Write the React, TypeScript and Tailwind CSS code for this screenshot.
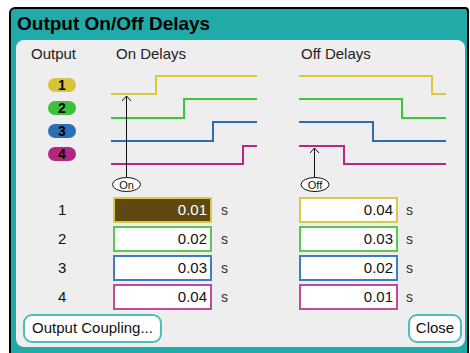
import React from 'react';

const FONT = { fontFamily: '"Liberation Sans", Arial, sans-serif' };

const outputs = [
  { id: 1, badge: 'bg-[#d6c33a]', line: '#dcc83a', border: 'border-[#d9c84a]', on: '0.01', off: '0.04' },
  { id: 2, badge: 'bg-[#3fc03c]', line: '#3cc43a', border: 'border-[#5ac850]', on: '0.02', off: '0.03' },
  { id: 3, badge: 'bg-[#2c6fb6]', line: '#2a6db4', border: 'border-[#3f7dc2]', on: '0.03', off: '0.02' },
  { id: 4, badge: 'bg-[#b3287f]', line: '#b52886', border: 'border-[#c04a9c]', on: '0.04', off: '0.01' },
];

const onPaths = ['M6 24 H51 V6 H152', 'M6 48 H79 V29 H152', 'M6 71 H108 V52 H152', 'M6 94 H138 V76 H152'];
const offPaths = ['M9 6 H142 V24 H156', 'M9 29 H112 V48 H156', 'M9 52 H83 V71 H156', 'M9 76 H54 V94 H156'];

const Marker: React.FC<{ x: number; tip: number; cx: number; label: string }> = ({ x, tip, cx, label }) => (
  <g>
    <line x1={x} y1={tip} x2={x} y2={107} stroke="#111" strokeWidth={1} />
    <path d={`M${x - 4.5} ${tip + 5} L${x} ${tip} L${x + 4.5} ${tip + 5}`} fill="none" stroke="#111" strokeWidth={1} />
    <ellipse cx={cx} cy={114.5} rx={14} ry={7} fill="#fff" stroke="#111" strokeWidth={1} />
    <text x={cx} y={118.5} textAnchor="middle" fontSize={11} fill="#111" style={FONT}>
      {label}
    </text>
  </g>
);

const DelayInput: React.FC<{ value: string; border: string; selected?: boolean }> = ({ value, border, selected }) => (
  <div
    className={`w-[99px] h-[26px] border-2 ${border} flex items-center justify-end pr-[3px] text-[15px] ${
      selected ? 'bg-[#5e4912] text-white' : 'bg-white text-[#111]'
    }`}
  >
    {value}
  </div>
);

export default function App() {
  return (
    <div className="w-[470px] h-[353px] bg-white overflow-hidden" style={FONT}>
      <div className="ml-[9px] mt-[7px] w-[460px] h-[346px] bg-[#20aaa8] border-l-2 border-t-2 border-r-2 border-black rounded-tl-[6px] rounded-tr-[4px]">
        <div className="h-[31px] flex items-center pl-[6px] text-[19px] font-bold text-black">Output On/Off Delays</div>

        <div className="ml-[5px] w-[449px] h-[307px] bg-[#eeeeee] rounded-[8px]">
          <div className="pt-[5px] flex h-[22px] text-[15px] leading-[17px] text-[#222]">
            <span className="w-[100px] pl-[15px]">Output</span>
            <span className="w-[185px]">On Delays</span>
            <span>Off Delays</span>
          </div>

          <div className="mt-[8px] flex h-[125px]">
            <div className="w-[89px] pl-[32px] pt-[8px] flex flex-col gap-[9px]">
              {outputs.map((o) => (
                <div
                  key={o.id}
                  className={`w-[28px] h-[14px] rounded-[7px] ${o.badge} flex items-center justify-center text-[14px] font-bold leading-none text-black`}
                >
                  {o.id}
                </div>
              ))}
            </div>

            <svg width={160} height={125} viewBox="0 0 160 125">
              {onPaths.map((d, i) => (
                <path key={d} d={d} fill="none" stroke={outputs[i].line} strokeWidth={2} />
              ))}
              <Marker x={21.5} tip={26} cx={21.5} label="On" />
            </svg>

            <div className="w-[25px]" />

            <svg width={165} height={125} viewBox="0 0 165 125">
              {offPaths.map((d, i) => (
                <path key={d} d={d} fill="none" stroke={outputs[i].line} strokeWidth={2} />
              ))}
              <Marker x={24.5} tip={78} cx={25} label="Off" />
            </svg>
          </div>

          <div className="mt-[2px] flex flex-col gap-[3px]">
            {outputs.map((o, i) => (
              <div key={o.id} className="h-[26px] flex items-center text-[15px] text-[#111]">
                <span className="w-[97px] pl-[42px]">{o.id}</span>
                <DelayInput value={o.on} border={o.border} selected={i === 0} />
                <span className="w-[87px] pl-[9px] text-[14px] text-[#333]">s</span>
                <DelayInput value={o.off} border={o.border} />
                <span className="pl-[8px] text-[14px] text-[#333]">s</span>
              </div>
            ))}
          </div>

          <div className="mt-[4px] flex justify-between pl-[7px] pr-[3px]">
            <button className="w-[139px] h-[29px] rounded-[9px] border-2 border-[#4dbdbd] bg-white text-[15px] text-[#111]">
              Output Coupling...
            </button>
            <button className="w-[54px] h-[29px] rounded-[9px] border-2 border-[#4dbdbd] bg-white text-[15px] text-[#111]">
              Close
            </button>
          </div>
        </div>
      </div>
    </div>
  );
}
